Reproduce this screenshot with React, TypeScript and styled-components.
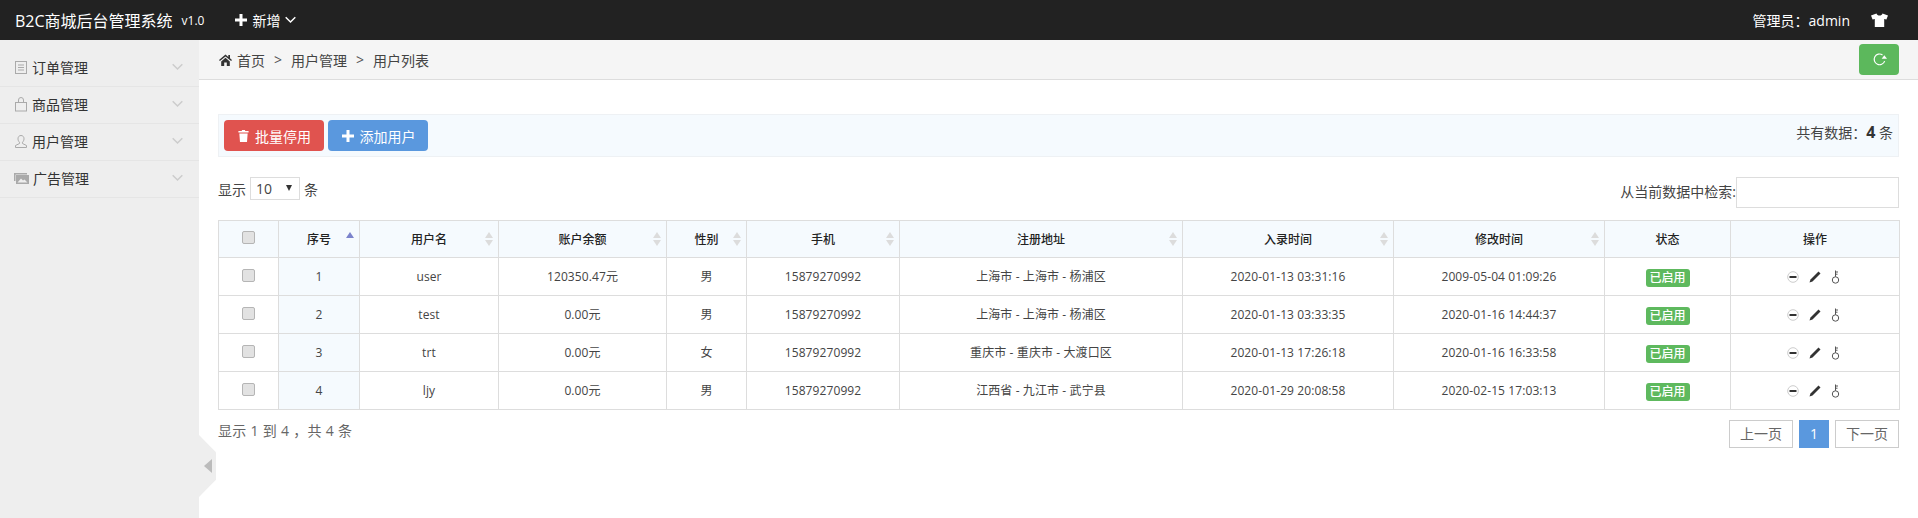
import styled, { createGlobalStyle } from 'styled-components';

const GlobalStyle = createGlobalStyle`
  html, body { margin: 0; padding: 0; background: #fff; }
  body {
    font-family: "Open Sans", "Noto Sans CJK SC", sans-serif;
    font-size: 14px;
    color: #333;
  }
  * { box-sizing: border-box; }
`;

const Page = styled.div`
  width: 1918px;
  height: 518px;
  display: flex;
  flex-direction: column;
  overflow: hidden;
`;

const TopBar = styled.header`
  height: 40px;
  flex: none;
  background: #222;
  color: #fff;
  display: flex;
  align-items: center;
  padding: 0 30px 0 15px;
`;

const Title = styled.span`
  font-size: 16px;
`;

const Version = styled.span`
  font-size: 12px;
  margin-left: 9px;
`;

const AddMenu = styled.span`
  display: flex;
  align-items: center;
  margin-left: 31px;
  font-size: 14px;
  gap: 5px;
`;

const Admin = styled.span`
  margin-left: auto;
  font-size: 14px;
`;

const Shirt = styled.svg`
  margin-left: 21px;
`;

const Body = styled.div`
  flex: 1;
  display: flex;
  position: relative;
`;

const Sidebar = styled.aside`
  width: 199px;
  flex: none;
  background: #eee;
  padding-top: 10px;
`;

const MenuItem = styled.div`
  height: 37px;
  display: flex;
  align-items: center;
  padding: 0 16px 2px 14px;
  border-bottom: 1px solid #e5e5e5;
  color: #333;
`;

const MenuLabel = styled.span`
  margin-left: 4px;
  flex: 1;
`;

const Toggle = styled.div`
  position: absolute;
  left: 199px;
  top: 395px;
  width: 17px;
  height: 62px;
  background: #eee;
  clip-path: polygon(0 0, 100% 28%, 100% 72%, 0 100%);
  display: flex;
  align-items: center;
  padding-left: 5px;
`;

const Main = styled.main`
  flex: 1;
  min-width: 0;
`;

const Crumbs = styled.nav`
  height: 40px;
  background: #f5f5f5;
  border-bottom: 1px solid #ddd;
  display: flex;
  align-items: center;
  padding: 0 19px 0 20px;
  color: #444;
`;

const CrumbSep = styled.span`
  margin: 0 9px;
  color: #555;
`;

const CrumbHome = styled.span`
  margin-left: 5px;
`;

const RefreshButton = styled.button`
  margin-left: auto;
  width: 40px;
  height: 31px;
  border: 0;
  border-radius: 4px;
  background: #5cb85c;
  display: flex;
  align-items: center;
  justify-content: center;
  padding: 0;
`;

const Content = styled.div`
  padding: 34px 19px 0;
`;

const ToolBox = styled.div`
  height: 43px;
  display: flex;
  align-items: center;
  padding: 0 5px;
  background: #f5fafe;
  border: 1px solid #eef1f4;
  gap: 4px;
`;

const ToolButton = styled.button<{ $bg: string }>`
  width: 100px;
  height: 31px;
  border: 0;
  border-radius: 4px;
  background: ${({ $bg }) => $bg};
  color: #fff;
  font: inherit;
  display: flex;
  align-items: center;
  justify-content: center;
  gap: 6px;
  padding: 0 0 0 1px;
`;

const Total = styled.span`
  margin-left: auto;
  color: #444;
  padding-bottom: 8px;
  strong { color: #333; font-size: 16px; }
`;

const FilterRow = styled.div`
  margin-top: 20px;
  height: 43px;
  display: flex;
  justify-content: space-between;
  align-items: flex-start;
`;

const Length = styled.label`
  display: flex;
  align-items: center;
  gap: 4px;
  height: 23px;
  color: #444;
`;

const SelectBox = styled.span`
  position: relative;
  display: block;
  width: 50px;
  height: 23px;
`;

const Select = styled.select`
  appearance: none;
  width: 100%;
  height: 100%;
  border: 1px solid #ddd;
  background: #fff;
  padding: 0 0 0 5px;
  font: inherit;
  color: #444;
`;

const SelectArrow = styled.span`
  position: absolute;
  right: 8px;
  top: 8px;
  width: 0;
  height: 0;
  border-left: 3.5px solid transparent;
  border-right: 3.5px solid transparent;
  border-top: 6px solid #333;
`;

const Search = styled.label`
  display: flex;
  align-items: flex-start;
  color: #444;
  line-height: 30px;
`;

const SearchInput = styled.input`
  width: 163px;
  height: 31px;
  border: 1px solid #ddd;
  background: #fff;
  padding: 0 4px;
`;

const Table = styled.table`
  width: 1681px;
  table-layout: fixed;
  border-collapse: collapse;
  font-size: 12px;
  border: 1px solid #ddd;
`;

const HeadCell = styled.th`
  position: relative;
  height: 37px;
  padding: 0;
  background: #f5fafe;
  border: 1px solid #ddd;
  font-weight: 500;
  color: #222;
  text-align: center;
`;

const Cell = styled.td<{ $sorted?: boolean }>`
  height: 38px;
  padding: 0;
  border: 1px solid #ddd;
  text-align: center;
  color: #444;
  line-height: 16px;
  letter-spacing: 0.1px;
  background: ${({ $sorted }) => ($sorted ? '#f5fafe' : '#fff')};
`;

const SortMarks = styled.span`
  position: absolute;
  right: 5px;
  top: 11px;
  display: flex;
  flex-direction: column;
  gap: 2px;
`;

const SortUp = styled.i<{ $active?: boolean }>`
  display: block;
  width: 0;
  height: 0;
  border-left: 4px solid transparent;
  border-right: 4px solid transparent;
  border-bottom: 6px solid ${({ $active }) => ($active ? '#7b83cc' : '#dcdcdc')};
`;

const SortDown = styled.i`
  display: block;
  width: 0;
  height: 0;
  border-left: 4px solid transparent;
  border-right: 4px solid transparent;
  border-top: 6px solid #dcdcdc;
`;

const Check = styled.input`
  appearance: none;
  display: block;
  width: 13px;
  height: 13px;
  margin: -3px auto 0;
  border: 1px solid #b5b5b5;
  border-radius: 2px;
  background: #e2e2e2;
`;

const Badge = styled.span`
  display: inline-block;
  width: 44px;
  height: 18px;
  line-height: 18px;
  margin-top: 2px;
  border-radius: 3px;
  background: #5eb95e;
  color: #fff;
  font-weight: 500;
  letter-spacing: 0;
  vertical-align: middle;
`;

const Actions = styled.span`
  display: flex;
  justify-content: center;
  align-items: center;
  gap: 10px;
  padding-right: 3px;
`;

const Footer = styled.div`
  display: flex;
  justify-content: space-between;
  align-items: flex-start;
  padding-top: 10px;
`;

const Info = styled.span`
  color: #666;
  letter-spacing: 0.3px;
`;

const Pager = styled.div`
  display: flex;
  gap: 6px;
`;

const PageButton = styled.span<{ $current?: boolean }>`
  height: 28px;
  line-height: 26px;
  padding: 0 10px;
  border: 1px solid ${({ $current }) => ($current ? '#5a98de' : '#ccc')};
  background: ${({ $current }) => ($current ? '#5a98de' : '#fff')};
  color: ${({ $current }) => ($current ? '#fff' : '#666')};
`;

const HomeIcon = () => (
  <svg width="13" height="12" viewBox="0 0 13 12">
    <path d="M6.5 0.5 0 6l.9 1L6.5 2.4 12.1 7l.9-1-2-1.7V1H9.3v1.9zM2.2 7.4V12h3V8.6h2.6V12h3V7.4L6.5 3.8z" fill="#333" />
  </svg>
);

const ShirtIcon = () => (
  <Shirt width="17" height="14" viewBox="0 0 17 14">
    <path d="M5.5.5 0 2.6l1.6 4 2.2-.6V14h9.4V6l2.2.6 1.6-4L11.500.5C11 2 10 2.600 8.500 2.600S6 2 5.500.5z" fill="#fff" />
  </Shirt>
);

const Chevron = ({ color, width }: { color: string; width: number }) => (
  <svg width={width} height="8" viewBox="0 0 11 7" fill="none">
    <path d="M.7.7 5.500 5.500 10.300.7" stroke={color} strokeWidth="1.500" />
  </svg>
);

const PlusIcon = () => (
  <svg width="12" height="12" viewBox="0 0 12 12">
    <path d="M4.500 0h3v4.500H12v3H7.500V12h-3V7.500H0v-3h4.500z" fill="#fff" />
  </svg>
);

const TrashIcon = () => (
  <svg width="11" height="12" viewBox="0 0 11 13">
    <path d="M4 0h3l.5 1H11v1.800H0V1h3.500zM1 3.800h9l-.7 9.200H1.700z" fill="#fff" />
  </svg>
);

const RefreshIcon = () => (
  <svg width="15" height="15" viewBox="0 0 14 14" fill="none">
    <path d="M11.800 8.500A5 5 0 1 1 9.800 2.700" stroke="#fff" strokeWidth="1.100" />
    <path d="M9 6.300h5L11.500 3z" fill="#fff" />
  </svg>
);

const menuIcons = {
  order: (
    <svg width="14" height="15" viewBox="0 0 14 15" fill="none" stroke="#aaa">
      <rect x="1.500" y="1.500" width="11" height="12" />
      <path d="M4 5h6M4 7.500h6M4 10h6" />
    </svg>
  ),
  goods: (
    <svg width="14" height="15" viewBox="0 0 14 15" fill="none" stroke="#aaa">
      <rect x="1.500" y="5.500" width="11" height="8.500" />
      <path d="M4.500 5.500V3a2.500 2.500 0 0 1 5 0v2.500" />
    </svg>
  ),
  user: (
    <svg width="14" height="15" viewBox="0 0 14 15" fill="none" stroke="#aaa">
      <path d="M7 1.500c2 0 3 1.500 3 3.300 0 1.500-.7 2.700-1.500 3.400v1.300l4 2v2H1.500v-2l4-2V8.200C4.700 7.500 4 6.300 4 4.800c0-1.800 1-3.300 3-3.300z" />
    </svg>
  ),
  ad: (
    <svg width="15" height="13" viewBox="0 0 15 13">
      <path d="M0 1h13v1.500H1.500V9H0z" fill="#aaa" />
      <path d="M2 3h13v9H2z" fill="#aaa" />
      <path d="M3.500 10.500 7 6.500l2 2 1.500-1 3 3z" fill="#eee" />
    </svg>
  ),
};

const MinusIcon = () => (
  <svg width="12" height="12" viewBox="0 0 12 12">
    <circle cx="6" cy="6" r="5.300" fill="#fff" stroke="#ccc" />
    <path d="M2.500 5h7v2h-7z" fill="#333" />
  </svg>
);

const PencilIcon = () => (
  <svg width="12" height="12" viewBox="0 0 12 12">
    <path d="M9.500 .5 11.500 2.500 3.500 10.500 .5 11.500l1-3z" fill="#333" />
  </svg>
);

const KeyIcon = () => (
  <svg width="9" height="14" viewBox="0 0 9 14" fill="none" stroke="#555">
    <circle cx="4.500" cy="10" r="3.200" />
    <path d="M4.500 6.800V.5M4.500 2H7M4.500 4.200H6.500" />
  </svg>
);

const menu = [
  { label: '订单管理', icon: menuIcons.order },
  { label: '商品管理', icon: menuIcons.goods },
  { label: '用户管理', icon: menuIcons.user },
  { label: '广告管理', icon: menuIcons.ad },
];

const columns = [
  { title: '序号', width: 81, sort: 'asc' },
  { title: '用户名', width: 139, sort: 'both' },
  { title: '账户余额', width: 168, sort: 'both' },
  { title: '性别', width: 80, sort: 'both' },
  { title: '手机', width: 153, sort: 'both' },
  { title: '注册地址', width: 283, sort: 'both' },
  { title: '入录时间', width: 211, sort: 'both' },
  { title: '修改时间', width: 211, sort: 'both' },
  { title: '状态', width: 126, sort: '' },
  { title: '操作', width: 169, sort: '' },
];

const rows = [
  ['1', 'user', '120350.47元', '男', '15879270992', '上海市 - 上海市 - 杨浦区', '2020-01-13 03:31:16', '2009-05-04 01:09:26'],
  ['2', 'test', '0.00元', '男', '15879270992', '上海市 - 上海市 - 杨浦区', '2020-01-13 03:33:35', '2020-01-16 14:44:37'],
  ['3', 'trt', '0.00元', '女', '15879270992', '重庆市 - 重庆市 - 大渡口区', '2020-01-13 17:26:18', '2020-01-16 16:33:58'],
  ['4', 'ljy', '0.00元', '男', '15879270992', '江西省 - 九江市 - 武宁县', '2020-01-29 20:08:58', '2020-02-15 17:03:13'],
];

const App = () => {
  return (
    <Page>
      <GlobalStyle />
      <TopBar>
        <Title>B2C商城后台管理系统</Title>
        <Version>v1.0</Version>
        <AddMenu>
          <PlusIcon />
          新增
          <Chevron color="#fff" width={11} />
        </AddMenu>
        <Admin>管理员：admin</Admin>
        <ShirtIcon />
      </TopBar>
      <Body>
        <Sidebar>
          {menu.map((item) => (
            <MenuItem key={item.label}>
              {item.icon}
              <MenuLabel>{item.label}</MenuLabel>
              <Chevron color="#ccc" width={11} />
            </MenuItem>
          ))}
        </Sidebar>
        <Toggle>
          <svg width="8" height="14" viewBox="0 0 8 14">
            <path d="M8 0v14L0 7z" fill="#bbb" />
          </svg>
        </Toggle>
        <Main>
          <Crumbs>
            <HomeIcon />
            <CrumbHome>首页</CrumbHome>
            <CrumbSep>&gt;</CrumbSep>
            用户管理
            <CrumbSep>&gt;</CrumbSep>
            用户列表
            <RefreshButton>
              <RefreshIcon />
            </RefreshButton>
          </Crumbs>
          <Content>
            <ToolBox>
              <ToolButton $bg="#e0534f">
                <TrashIcon />
                批量停用
              </ToolButton>
              <ToolButton $bg="#5a98de">
                <PlusIcon />
                添加用户
              </ToolButton>
              <Total>
                共有数据：<strong>4</strong> 条
              </Total>
            </ToolBox>
            <FilterRow>
              <Length>
                显示
                <SelectBox>
                  <Select defaultValue="10">
                    <option>10</option>
                    <option>25</option>
                    <option>50</option>
                  </Select>
                  <SelectArrow />
                </SelectBox>
                条
              </Length>
              <Search>
                从当前数据中检索:
                <SearchInput />
              </Search>
            </FilterRow>
            <Table>
              <colgroup>
                <col style={{ width: 60 }} />
                {columns.map((c) => (
                  <col key={c.title} style={{ width: c.width }} />
                ))}
              </colgroup>
              <thead>
                <tr>
                  <HeadCell>
                    <Check type="checkbox" />
                  </HeadCell>
                  {columns.map((c) => (
                    <HeadCell key={c.title}>
                      {c.title}
                      {c.sort && (
                        <SortMarks>
                          <SortUp $active={c.sort === 'asc'} />
                          {c.sort === 'both' && <SortDown />}
                        </SortMarks>
                      )}
                    </HeadCell>
                  ))}
                </tr>
              </thead>
              <tbody>
                {rows.map((row) => (
                  <tr key={row[0]}>
                    <Cell>
                      <Check type="checkbox" />
                    </Cell>
                    {row.map((value, i) => (
                      <Cell key={i} $sorted={i === 0}>
                        {value}
                      </Cell>
                    ))}
                    <Cell>
                      <Badge>已启用</Badge>
                    </Cell>
                    <Cell>
                      <Actions>
                        <MinusIcon />
                        <PencilIcon />
                        <KeyIcon />
                      </Actions>
                    </Cell>
                  </tr>
                ))}
              </tbody>
            </Table>
            <Footer>
              <Info>显示 1 到 4 ，共 4 条</Info>
              <Pager>
                <PageButton>上一页</PageButton>
                <PageButton $current>1</PageButton>
                <PageButton>下一页</PageButton>
              </Pager>
            </Footer>
          </Content>
        </Main>
      </Body>
    </Page>
  );
};

export default App;
